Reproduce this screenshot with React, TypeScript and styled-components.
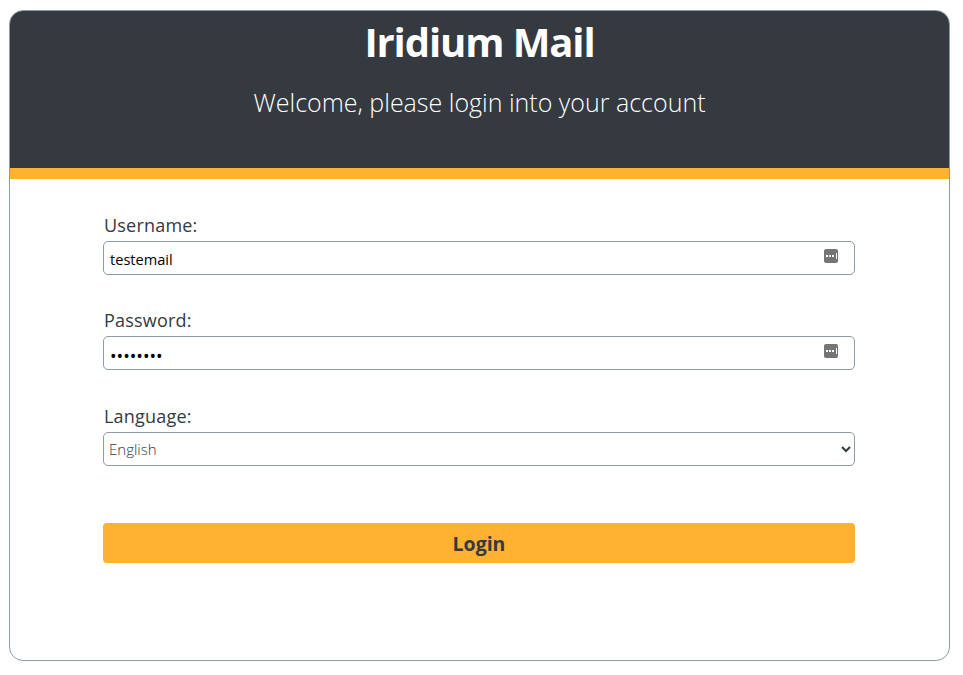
import React from "react";
import styled, { createGlobalStyle } from "styled-components";

const GlobalStyle = createGlobalStyle`
  html, body {
    margin: 0;
    padding: 0;
    background: #fff;
    font-family: "Open Sans", "Noto Sans", "Liberation Sans", sans-serif;
  }
`;

const Page = styled.div`
  padding: 10px 13px 14px 9px;
`;

const Card = styled.div`
  height: 651px;
  box-sizing: border-box;
  border: 1px solid #8f9aa3;
  border-radius: 14px;
  overflow: hidden;
  background: #fff;
`;

const Header = styled.header`
  height: 169px;
  box-sizing: border-box;
  margin: -1px -1px 0;
  background: #343a40;
  border-bottom: 11px solid #ffb130;
  color: #fff;
  text-align: center;
`;

const Title = styled.h1`
  margin: 0;
  padding-top: 6px;
  font-size: 40px;
  line-height: 52px;
  font-weight: 700;
  letter-spacing: -1.1px;
`;

const Subtitle = styled.p`
  margin: 17px 0 0;
  font-size: 25px;
  line-height: 34px;
  font-weight: 300;
`;

const Form = styled.form`
  display: flex;
  flex-direction: column;
  width: 752px;
  margin: 33px 0 0 93px;
`;

const Field = styled.div`
  display: flex;
  flex-direction: column;
  margin-bottom: 32.4px;
`;

const Label = styled.label`
  padding-left: 1px;
  font-size: 18px;
  line-height: 26px;
  margin-bottom: 3px;
  color: #343a40;
  letter-spacing: 0.2px;
`;

const InputWrap = styled.div`
  position: relative;
`;

const Input = styled.input<{ $masked?: boolean }>`
  display: block;
  width: 100%;
  height: 34px;
  box-sizing: border-box;
  padding: ${(p) => (p.$masked ? "5px" : "1px")} 6px 0;
  border: 1px solid #8f9aa3;
  border-radius: 5px;
  font-family: inherit;
  font-size: ${(p) => (p.$masked ? "17.5px" : "14.6px")};
  color: #000;
  outline: none;
`;

const KeyIcon = styled.svg`
  position: absolute;
  top: 8px;
  right: 17px;
  width: 14px;
  height: 14px;
`;

const Select = styled.select`
  display: block;
  width: 100%;
  height: 34px;
  box-sizing: border-box;
  padding: 0 1px;
  border: 1px solid #8f9aa3;
  border-radius: 5px;
  background: #fff;
  font-family: inherit;
  font-size: 15px;
  font-weight: 300;
  color: #343a40;
  outline: none;
`;

const LoginButton = styled.button`
  height: 40px;
  margin-top: 24.6px;
  padding: 2px 0 0;
  border: 0;
  border-radius: 4px;
  background: #ffb130;
  color: #343a40;
  font-family: inherit;
  font-size: 19.5px;
  font-weight: 700;
`;

const FillIcon = () => (
  <KeyIcon viewBox="0 0 14 14">
    <rect width="14" height="14" rx="2" fill="#757575" />
    <rect x="2" y="6" width="2" height="2" fill="#fff" />
    <rect x="5" y="6" width="2" height="2" fill="#fff" />
    <rect x="8" y="6" width="2" height="2" fill="#fff" />
    <rect x="12" y="4" width="1" height="6" fill="#fff" />
  </KeyIcon>
);

export default function App() {
  return (
    <Page>
      <GlobalStyle />
      <Card>
        <Header>
          <Title>Iridium Mail</Title>
          <Subtitle>Welcome, please login into your account</Subtitle>
        </Header>
        <Form onSubmit={(e) => e.preventDefault()}>
          <Field>
            <Label htmlFor="username">Username:</Label>
            <InputWrap>
              <Input id="username" type="text" defaultValue="testemail" />
              <FillIcon />
            </InputWrap>
          </Field>
          <Field>
            <Label htmlFor="password">Password:</Label>
            <InputWrap>
              <Input id="password" type="password" defaultValue="testmail" $masked />
              <FillIcon />
            </InputWrap>
          </Field>
          <Field>
            <Label htmlFor="language">Language:</Label>
            <Select id="language" defaultValue="en">
              <option value="en">English</option>
            </Select>
          </Field>
          <LoginButton type="submit">Login</LoginButton>
        </Form>
      </Card>
    </Page>
  );
}
